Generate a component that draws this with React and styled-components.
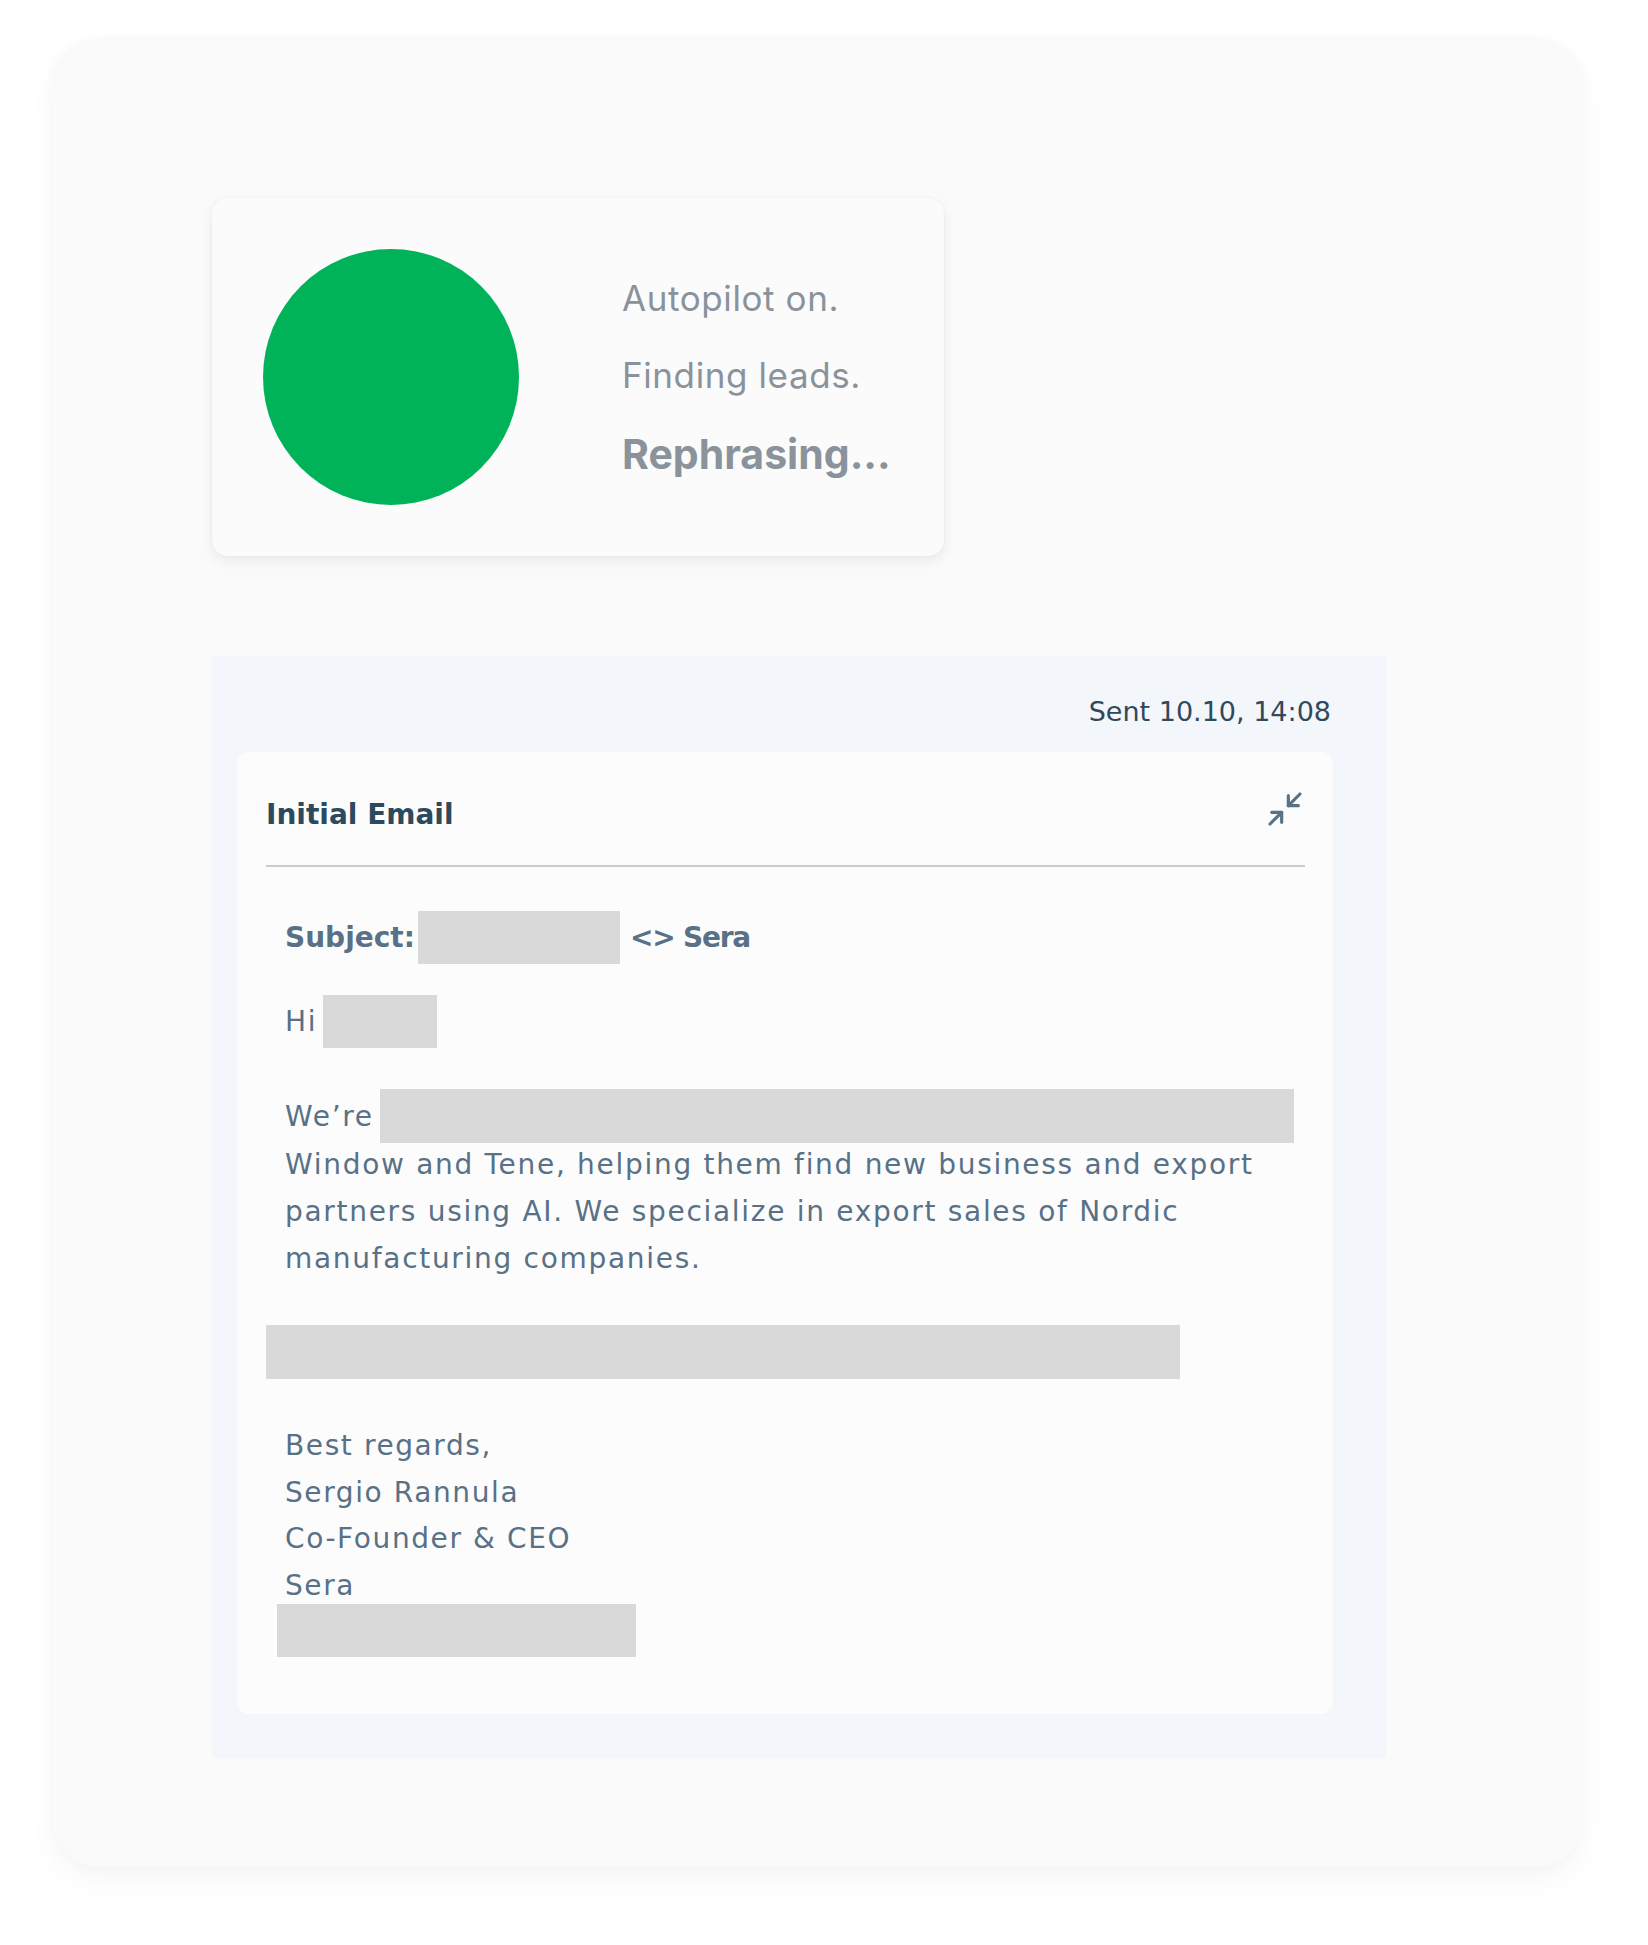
import React from 'react';
import styled, { createGlobalStyle } from 'styled-components';

const GlobalStyle = createGlobalStyle`
  html, body {
    margin: 0;
    padding: 0;
    background: #ffffff;
  }
  * { box-sizing: border-box; }
`;

// --- page shell ---
const Page = styled.div`
  padding: 38px 0 79px 52px;
`;

const Frame = styled.div`
  width: 1531px;
  background: #fafafa;
  border-radius: 46px;
  box-shadow: 0 14px 28px rgba(0, 0, 0, 0.035), 0 0 14px rgba(0, 0, 0, 0.02);
  padding: 160px 0 109px 160px;
  display: flex;
  flex-direction: column;
  gap: 100px;
`;

// --- autopilot status card ---
const StatusCard = styled.div`
  width: 732px;
  height: 358px;
  background: #fbfbfb;
  border-radius: 16px;
  box-shadow: 0 5px 12px rgba(40, 50, 90, 0.08), 0 0 3px rgba(40, 50, 90, 0.04);
  display: flex;
  align-items: center;
  padding: 0 0 0 51px;
  gap: 103px;
`;

const Dot = styled.div`
  width: 256px;
  height: 256px;
  border-radius: 50%;
  background: #00b359;
  flex-shrink: 0;
`;

const StatusList = styled.div`
  display: flex;
  flex-direction: column;
  font-family: Inter, "Noto Sans", sans-serif;
  color: #8a939b;
`;

const StatusLine = styled.div`
  font-size: ${({ $active }) => ($active ? '41px' : '35px')};
  font-weight: ${({ $active }) => ($active ? 700 : 400)};
  line-height: ${({ $active }) => ($active ? '80px' : '77px')};
  letter-spacing: ${({ $active }) => ($active ? '0' : '0.6px')};
`;

// --- email panel ---
const Panel = styled.div`
  width: 1175px;
  background: #f3f6fa;
  padding: 39px 54px 44px 25px;
  font-family: "DejaVu Sans", Verdana, sans-serif;
`;

const SentRow = styled.div`
  text-align: right;
  font-size: 27px;
  line-height: 34px;
  color: #30495b;
  padding-right: 2px;
  margin-bottom: 23px;
`;

const EmailCard = styled.div`
  background: #fcfcfc;
  border-radius: 12px;
  padding: 45px 28px 57px 29px;
`;

const CardHeader = styled.div`
  display: flex;
  align-items: center;
  justify-content: space-between;
  height: 36px;
  margin-bottom: 32px;
`;

const CardTitle = styled.div`
  font-size: 28px;
  font-weight: 700;
  color: #2c4a5e;
  line-height: 36px;
`;

const Divider = styled.div`
  height: 2px;
  background: #c4cdd4;
  margin-bottom: 44px;
`;

const Row = styled.div`
  display: flex;
  align-items: center;
  padding-left: ${({ $indent }) => $indent ?? 19}px;
  margin-top: ${({ $gap }) => $gap || 0}px;
  font-size: 28px;
  color: #587186;
  letter-spacing: 1.7px;
`;

const Strong = styled.span`
  font-weight: 700;
  letter-spacing: ${({ $tight }) => ($tight ? '-1.2px' : '0')};
  color: #587186;
`;

const Redacted = styled.div`
  background: #d9d9d9;
  width: ${({ $w }) => $w}px;
  height: ${({ $h }) => $h || 53}px;
  margin-left: ${({ $ml }) => $ml || 0}px;
  margin-right: ${({ $mr }) => $mr || 0}px;
  flex-shrink: 0;
`;

const BodyText = styled.p`
  margin: -2px 0 0 0;
  padding-left: 19px;
  font-size: 28px;
  line-height: 47px;
  color: #587186;
  letter-spacing: 1.7px;
`;

const Signature = styled.div`
  margin-top: 44px;
  margin-bottom: -5px;
  padding-left: 19px;
  font-size: 28px;
  line-height: 46.5px;
  color: #587186;
  letter-spacing: 1.6px;
`;

const IconButton = styled.button`
  border: none;
  background: none;
  padding: 0;
  display: flex;
  color: #587387;
  margin-bottom: 12px;
  cursor: pointer;
`;

const MinimizeIcon = () => (
  <svg width="40" height="40" viewBox="0 0 24 24" fill="none" stroke="currentColor"
    strokeWidth="1.9" strokeLinecap="round" strokeLinejoin="round">
    <path d="m14 10 7-7" />
    <path d="M20 10h-6V4" />
    <path d="m3 21 7-7" />
    <path d="M4 14h6v6" />
  </svg>
);

const App = () => {
  return (
    <>
      <GlobalStyle />
      <Page>
        <Frame>
          <StatusCard>
            <Dot />
            <StatusList>
              <StatusLine>Autopilot on.</StatusLine>
              <StatusLine>Finding leads.</StatusLine>
              <StatusLine $active>Rephrasing...</StatusLine>
            </StatusList>
          </StatusCard>

          <Panel>
            <SentRow>Sent 10.10, 14:08</SentRow>
            <EmailCard>
              <CardHeader>
                <CardTitle>Initial Email</CardTitle>
                <IconButton aria-label="Minimize">
                  <MinimizeIcon />
                </IconButton>
              </CardHeader>
              <Divider />

              <Row>
                <Strong>Subject:</Strong>
                <Redacted $w={202} $ml={3} $mr={10} />
                <Strong $tight>&lt;&gt; Sera</Strong>
              </Row>

              <Row $gap={31}>
                <span>Hi</span>
                <Redacted $w={114} $ml={6} />
              </Row>

              <Row $gap={41}>
                <span>We’re</span>
                <Redacted $w={914} $h={54} $ml={6} />
              </Row>
              <BodyText>
                Window and Tene, helping them find new business and export<br />
                partners using AI. We specialize in export sales of Nordic<br />
                manufacturing companies.
              </BodyText>

              <Row $indent={0} $gap={43}>
                <Redacted $w={914} $h={54} />
              </Row>

              <Signature>
                <div>Best regards,</div>
                <div>Sergio Rannula</div>
                <div>Co-Founder &amp; CEO</div>
                <div>Sera</div>
              </Signature>
              <Row $indent={11}>
                <Redacted $w={359} />
              </Row>
            </EmailCard>
          </Panel>
        </Frame>
      </Page>
    </>
  );
};

export default App;
